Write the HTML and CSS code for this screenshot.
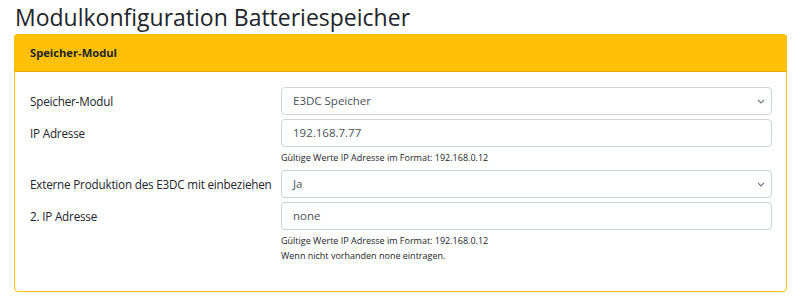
FILE: index.html
```html
<!DOCTYPE html>
<html lang="de">
<head>
<meta charset="UTF-8">
<title>Modulkonfiguration Batteriespeicher</title>
<link rel="stylesheet" href="styles.css">
</head>
<body>

<h1>Modulkonfiguration Batteriespeicher</h1>

<!-- Speicher-Modul Karte -->
<div class="card">
  <div class="card-head">Speicher-Modul</div>
  <div class="card-body">

    <div class="row">
      <label class="lbl">Speicher-Modul</label>
      <div class="ctl">
        <div class="field select">E3DC Speicher
          <svg class="chev" width="8" height="5" viewBox="0 0 8 5"><path d="M1 1l3 3 3-3" fill="none" stroke="#6c757d" stroke-width="1.1"/></svg>
        </div>
      </div>
    </div>

    <div class="row">
      <label class="lbl">IP Adresse</label>
      <div class="ctl">
        <div class="field">192.168.7.77</div>
        <small class="hint">Gültige Werte IP Adresse im Format: 192.168.0.12</small>
      </div>
    </div>

    <div class="row">
      <label class="lbl">Externe Produktion des E3DC mit einbeziehen</label>
      <div class="ctl">
        <div class="field select">Ja
          <svg class="chev" width="8" height="5" viewBox="0 0 8 5"><path d="M1 1l3 3 3-3" fill="none" stroke="#6c757d" stroke-width="1.1"/></svg>
        </div>
      </div>
    </div>

    <div class="row">
      <label class="lbl">2. IP Adresse</label>
      <div class="ctl">
        <div class="field">none</div>
        <small class="hint">Gültige Werte IP Adresse im Format: 192.168.0.12<br>Wenn nicht vorhanden none eintragen.</small>
      </div>
    </div>

  </div>
</div>

</body>
</html>
```

FILE: styles.css
```css
*{box-sizing:border-box}
body{
  margin:0;padding:0 11px 0 14px;
  font-family:'Open Sans',sans-serif;
  color:#212529;background:#fff}
h1{
  margin:0;padding:4px 0 0 1px;height:34px;
  font-size:23px;font-weight:400;line-height:27px}
.card{
  border:1px solid #ffc107;border-radius:4px;
  height:258px}
.card-head{
  background:#ffc107;height:38px;margin:-1px -1px 0;
  border-radius:4px 4px 0 0;
  border-bottom:1px solid #e0ab0b;
  padding:0 16px;
  font-size:11.2px;font-weight:700;line-height:38px}
.card-body{padding:15px 14px 0 15px}
.row{display:grid;grid-template-columns:251px 1fr;margin-bottom:4px}
.lbl{font-size:11.7px;letter-spacing:-.2px;line-height:28px;white-space:nowrap}
.field{
  position:relative;height:28px;
  border:1px solid #ced4da;border-radius:4px;
  padding:0 11px;font-size:11.5px;line-height:26px;color:#495057}
.chev{position:absolute;right:6px;top:11px}
.hint{display:block;font-size:9px;line-height:15.5px;padding-top:3px;color:#212529}
```
